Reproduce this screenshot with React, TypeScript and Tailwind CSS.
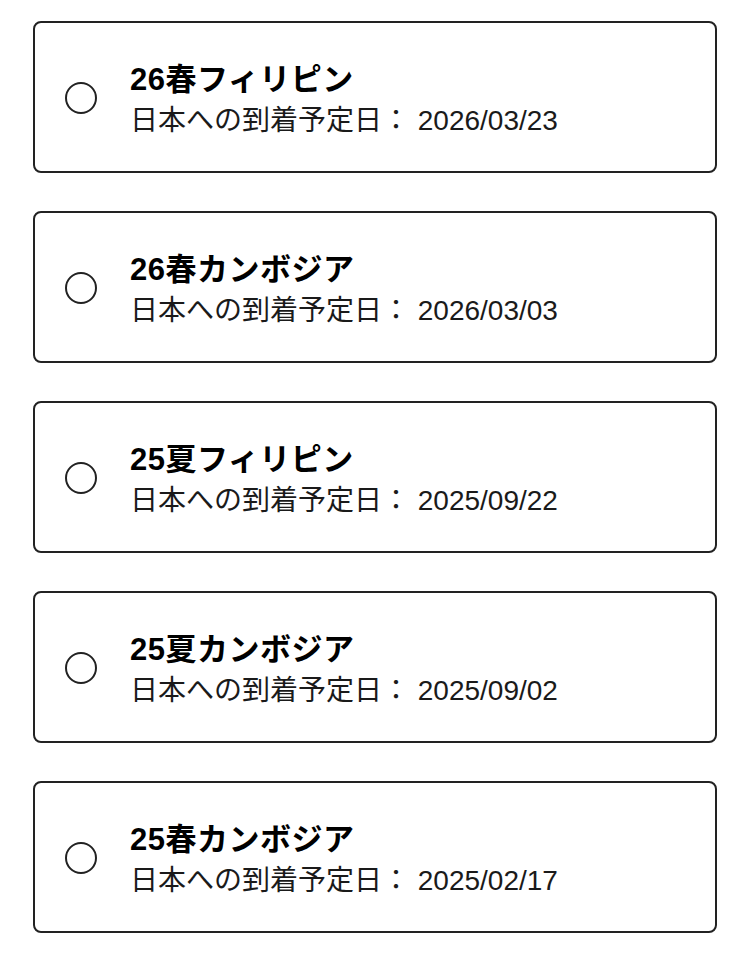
import { useState } from 'react'

const COHORTS = [
  { id: '26sp-ph', name: '26春フィリピン', arrival: '2026/03/23' },
  { id: '26sp-kh', name: '26春カンボジア', arrival: '2026/03/03' },
  { id: '25su-ph', name: '25夏フィリピン', arrival: '2025/09/22' },
  { id: '25su-kh', name: '25夏カンボジア', arrival: '2025/09/02' },
  { id: '25sp-kh', name: '25春カンボジア', arrival: '2025/02/17' },
]

export default function App() {
  const [selected, setSelected] = useState<string | null>(null)

  return (
    <div
      className="bg-white min-h-screen px-[33px] pt-[21px] pb-[30px] flex flex-col gap-[38px] text-black"
      style={{ fontFamily: '"Liberation Sans", "Noto Sans CJK JP", sans-serif' }}
    >
      {COHORTS.map((c) => (
        <button
          key={c.id}
          type="button"
          onClick={() => setSelected(c.id)}
          className="flex items-center border-2 border-[#222] rounded-lg pl-[30px] pr-6 pt-[32px] pb-[30px] text-left bg-white"
        >
          <span className="w-8 h-8 rounded-full border-2 border-[#222] flex items-center justify-center shrink-0">
            {selected === c.id && <span className="w-4 h-4 rounded-full bg-[#222]" />}
          </span>
          <span className="flex flex-col ml-[33px] pt-1">
            <span className="text-[31px] leading-[41px] font-bold tracking-[0.5px]">{c.name}</span>
            <span className="text-[28px] leading-[41px] text-[#1a1a1a]">
              日本への到着予定日： {c.arrival}
            </span>
          </span>
        </button>
      ))}
    </div>
  )
}
